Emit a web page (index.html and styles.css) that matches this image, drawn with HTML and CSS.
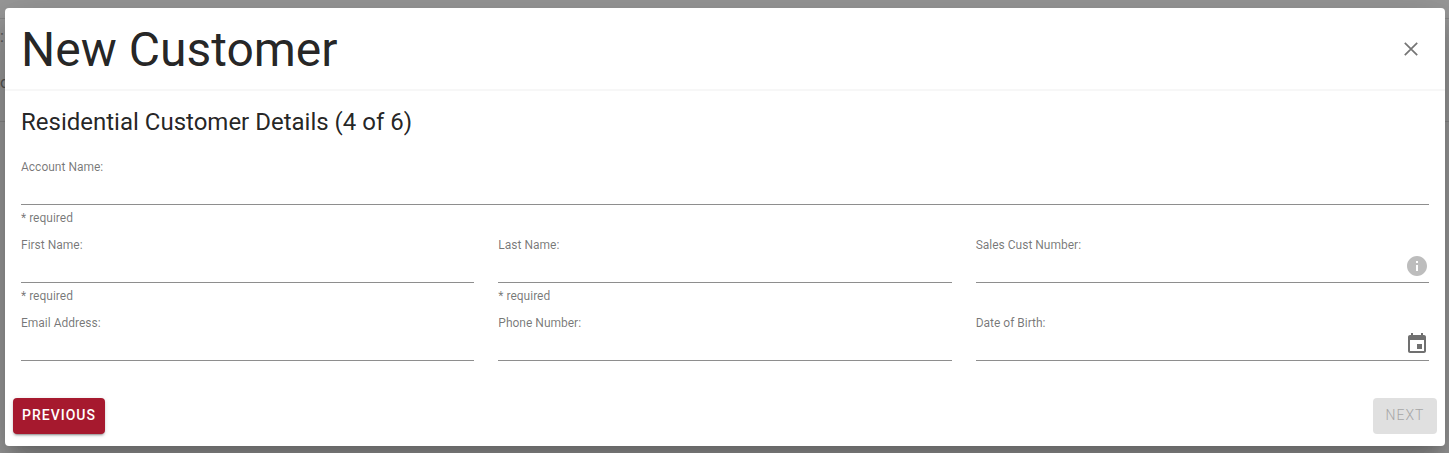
FILE: index.html
```
<!DOCTYPE html>
<html lang="en">
<head>
<meta charset="UTF-8">
<meta name="viewport" content="width=device-width, initial-scale=1.0">
<title>New Customer</title>
<link rel="stylesheet" href="styles.css">
</head>
<body>
    <div class="page-behind" aria-hidden="true">
        <div class="behind-row">:</div>
        <div class="behind-row">o</div>
    </div>

    <div class="dialog" role="dialog" aria-labelledby="dialog-title">
        <header class="dialog-header">
            <h1 id="dialog-title">New Customer</h1>
            <button type="button" class="close-btn" aria-label="Close">
                <svg viewBox="0 0 24 24" width="24" height="24"><path d="M5.8 5.8 18.2 18.2M18.2 5.8 5.8 18.2" fill="none" stroke="currentColor" stroke-width="1.7"/></svg>
            </button>
        </header>

        <form class="customer-form">
            <div class="dialog-body">
                <h2>Residential Customer Details (4 of 6)</h2>
                <div class="form-grid">
                    <div class="form-group full-width">
                        <label for="accountName">Account Name:</label>
                        <input type="text" id="accountName" name="accountName" required>
                        <p class="helper">* required</p>
                    </div>
                    <div class="form-group">
                        <label for="firstName">First Name:</label>
                        <input type="text" id="firstName" name="firstName" required>
                        <p class="helper">* required</p>
                    </div>
                    <div class="form-group">
                        <label for="lastName">Last Name:</label>
                        <input type="text" id="lastName" name="lastName" required>
                        <p class="helper">* required</p>
                    </div>
                    <div class="form-group">
                        <label for="salesCustNumber">Sales Cust Number:</label>
                        <div class="input-row">
                            <input type="text" id="salesCustNumber" name="salesCustNumber">
                            <svg class="info-icon" viewBox="0 0 24 24" width="24" height="24"><path d="M12 2C6.48 2 2 6.48 2 12s4.48 10 10 10 10-4.48 10-10S17.52 2 12 2zm1 15h-2v-6h2v6zm0-8h-2V7h2v2z"/></svg>
                        </div>
                    </div>
                    <div class="form-group">
                        <label for="email">Email Address:</label>
                        <input type="email" id="email" name="email">
                    </div>
                    <div class="form-group">
                        <label for="phone">Phone Number:</label>
                        <input type="tel" id="phone" name="phone">
                    </div>
                    <div class="form-group">
                        <label for="dateOfBirth">Date of Birth:</label>
                        <div class="input-row">
                            <input type="text" id="dateOfBirth" name="dateOfBirth">
                            <button type="button" class="date-btn" aria-label="Choose date">
                                <svg viewBox="0 0 24 24" width="24" height="24"><path d="M17 12h-5v5h5v-5zM16 1v2H8V1H6v2H5c-1.11 0-1.99.9-1.99 2L3 19c0 1.1.89 2 2 2h14c1.1 0 2-.9 2-2V5c0-1.1-.9-2-2-2h-1V1h-2zm3 18H5V8h14v11z"/></svg>
                            </button>
                        </div>
                    </div>
                </div>
            </div>

            <div class="dialog-actions">
                <button type="button" class="btn btn-primary">Previous</button>
                <button type="submit" class="btn btn-next" disabled>Next</button>
            </div>
        </form>
    </div>
</body>
</html>
```
FILE: styles.css
```
* {
    box-sizing: border-box;
}

body {
    margin: 0;
    padding: 8px 4px 7px 5px;
    background-color: #999;
    color: rgba(0, 0, 0, 0.87);
    font-family: Roboto, sans-serif;
    overflow: hidden;
}

/* dimmed page under the dialog */
.page-behind {
    position: absolute;
    top: 18px;
    left: 0;
    width: 100%;
    border-top: 1px solid #888;
    border-bottom: 1px solid #888;
    color: #555;
    font-size: 16px;
    padding: 6px 0 26px;
}

.behind-row {
    line-height: 24px;
}

.behind-row + .behind-row {
    margin-top: 22px;
}

.dialog {
    position: relative;
    background-color: #fff;
    border-radius: 4px;
    box-shadow: 0 11px 15px -7px rgba(0, 0, 0, 0.2), 0 24px 38px 3px rgba(0, 0, 0, 0.14), 0 9px 46px 8px rgba(0, 0, 0, 0.12);
}

.dialog-header {
    display: flex;
    justify-content: space-between;
    align-items: center;
    padding: 14px 16px 11px;
    border-bottom: 2px solid #f7f7f7;
}

h1 {
    margin: 0;
    font-size: 48px;
    font-weight: 400;
    line-height: 56px;
}

h2 {
    margin: 0 0 20px;
    font-size: 24px;
    font-weight: 400;
    line-height: 32px;
}

.close-btn,
.date-btn {
    display: flex;
    padding: 0;
    border: none;
    background: none;
    color: #757575;
    cursor: pointer;
}

.close-btn {
    margin: 0 6px 2px 0;
}

.dialog-body {
    padding: 15px 16px 24px;
}

.form-grid {
    display: grid;
    grid-template-columns: repeat(3, 1fr);
    gap: 9px 24px;
}

.full-width {
    grid-column: 1 / -1;
}

.form-group label {
    display: block;
    color: rgba(0, 0, 0, 0.54);
    font-size: 12px;
    line-height: 18px;
}

.form-group input {
    display: block;
    width: 100%;
    height: 29px;
    padding: 0;
    border: none;
    border-bottom: 1px solid #8e8e8e;
    background: none;
    font-family: inherit;
    font-size: 16px;
    outline: none;
}

.helper {
    margin: 4px 0 0;
    color: rgba(0, 0, 0, 0.54);
    font-size: 12px;
    line-height: 18px;
}

.input-row {
    display: flex;
    align-items: flex-start;
    border-bottom: 1px solid #8e8e8e;
}

.input-row input {
    flex: 1;
    height: 28px;
    border-bottom: none;
}

.input-row svg {
    display: block;
    fill: currentColor;
}

.info-icon {
    color: #bdbdbd;
}

.date-btn {
    color: #707070;
}

.dialog-actions {
    display: flex;
    justify-content: space-between;
    padding: 13px 8px 12px;
}

.btn {
    height: 36px;
    padding: 0 9px 2px;
    border: none;
    border-radius: 4px;
    font-family: inherit;
    font-size: 14px;
    font-weight: 500;
    letter-spacing: 1px;
    text-transform: uppercase;
    cursor: pointer;
}

.btn-primary {
    background-color: #a6192e;
    color: #fff;
    box-shadow: 0 3px 1px -2px rgba(0, 0, 0, 0.2), 0 2px 2px rgba(0, 0, 0, 0.14), 0 1px 5px rgba(0, 0, 0, 0.12);
}

.btn-next {
    min-width: 64px;
    background-color: #e0e0e0;
    color: #a6a6a6;
    font-weight: 300;
    cursor: default;
}
```
